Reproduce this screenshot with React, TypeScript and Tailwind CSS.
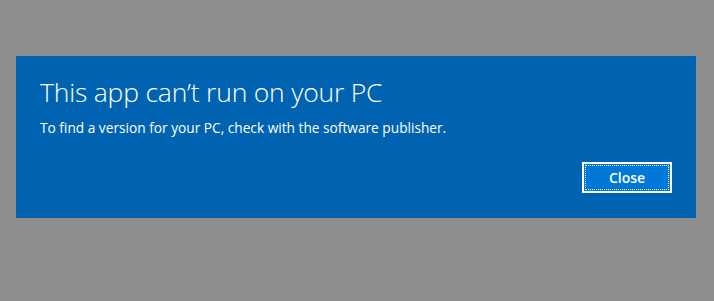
export default function App() {
  return (
    <div className="w-[714px] h-[301px] bg-[#8e8e8e] pt-[56px] pl-[16px]" style={{ fontFamily: "'Open Sans', 'Noto Sans', sans-serif" }}>
      <div className="w-[680px] h-[162px] bg-[#0063b1] text-white flex flex-col pl-[24px] pr-[24px]">
        <h1 className="mt-[18px] text-[26.5px] leading-[36px] font-light tracking-[-0.2px]">This app can’t run on your PC</h1>
        <p className="mt-[8px] text-[13.7px] leading-[20px]">To find a version for your PC, check with the software publisher.</p>
        <div className="flex justify-end mt-[24px]">
          <button className="w-[90px] h-[31px] border-2 border-white bg-[#0078d7] p-[1px]">
            <span className="flex h-full w-full items-center justify-center border border-dotted border-white text-[14px] font-semibold leading-none">Close</span>
          </button>
        </div>
      </div>
    </div>
  );
}
